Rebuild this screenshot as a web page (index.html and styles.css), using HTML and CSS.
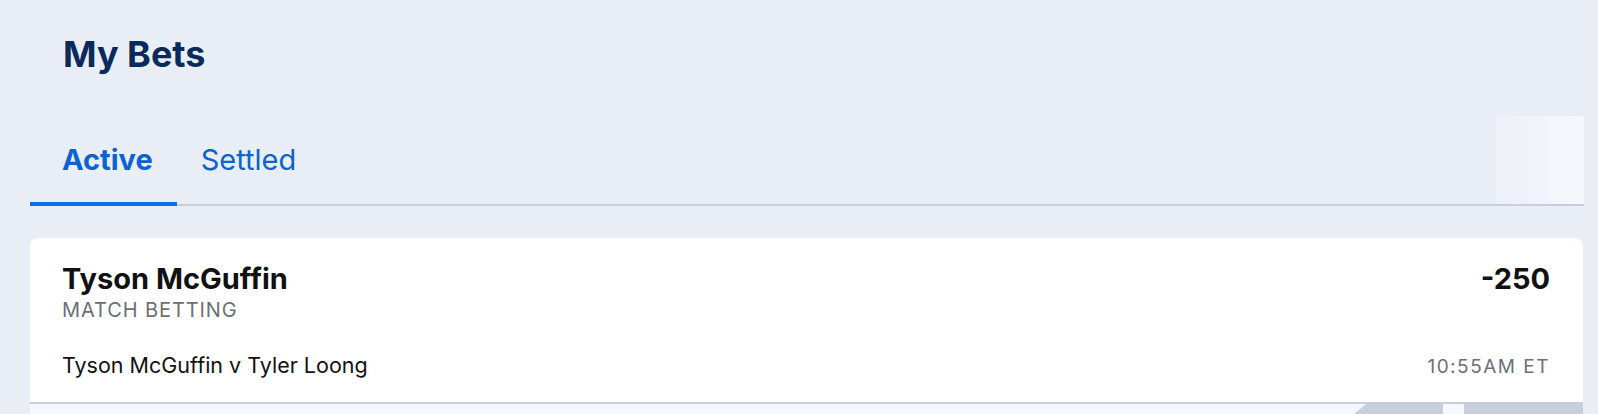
FILE: index.html
```html
<!DOCTYPE html>
<html lang="en">
<head>
    <meta charset="UTF-8">
    <meta name="viewport" content="width=device-width, initial-scale=1.0">
    <title>My Bets</title>
    <link rel="stylesheet" href="styles.css">
</head>
<body>

<!-- Page header -->
<div class="page-header">
    <h1 class="page-title">My Bets</h1>
</div>

<!-- Tabs -->
<div class="tabs-wrap">
    <div class="tabs">
        <a href="#" class="tab tab-active">Active</a>
        <a href="#" class="tab">Settled</a>
    </div>
    <div class="tabs-fade"></div>
</div>

<!-- Bet list -->
<div class="bet-list">
    <div class="bet-card">
        <div class="bet-row">
            <div class="bet-selection">Tyson McGuffin</div>
            <div class="bet-odds">-250</div>
        </div>
        <div class="bet-market">MATCH BETTING</div>
        <div class="bet-row bet-event-row">
            <div class="bet-event">Tyson McGuffin v Tyler Loong</div>
            <div class="bet-time">10:55AM ET</div>
        </div>
    </div>
    <div class="bet-footer">
        <div class="bet-footer-art"></div>
    </div>
</div>

</body>
</html>
```

FILE: styles.css
```css
body {
    font-family: Inter, "Noto Sans", sans-serif;
    background-color: #e9eef6;
    margin: 0;
    padding: 0;
    height: 414px;
    overflow: hidden;
}

/* Header */
.page-header {
    padding: 32px 0 0 63px;
    height: 116px;
    box-sizing: border-box;
}
.page-title {
    margin: 0;
    font-size: 36px;
    font-weight: 700;
    color: #0b2a5c;
    line-height: 44px;
}

/* Tabs */
.tabs-wrap {
    display: flex;
    margin: 0 14px 0 30px;
    height: 88px;
    border-bottom: 2px solid #c6cfdb;
}
.tabs {
    display: flex;
    flex: 1;
}
.tab {
    display: flex;
    align-items: center;
    padding: 0 24px;
    font-size: 29px;
    color: #0b63d1;
    text-decoration: none;
    border-bottom: 4px solid transparent;
    margin-bottom: -2px;
}
.tab:first-child {
    padding-left: 32px;
}
.tab-active {
    font-weight: 700;
    border-bottom-color: #0d6fe6;
}
.tabs-fade {
    width: 88px;
    background: linear-gradient(to right, #edf1f7, #f5f8fd);
}

/* Bet card */
.bet-list {
    margin: 32px 15px 0 30px;
}
.bet-card {
    background-color: #fff;
    border-radius: 8px 8px 0 0;
    padding: 24px 33px 0 32px;
    height: 166px;
    box-sizing: border-box;
    border-bottom: 2px solid #c6d0dc;
}
.bet-row {
    display: flex;
    justify-content: space-between;
    align-items: baseline;
}
.bet-selection, .bet-odds {
    font-size: 29px;
    font-weight: 700;
    color: #111;
    line-height: 34px;
}
.bet-market {
    font-size: 20px;
    letter-spacing: 0.9px;
    color: #6c7076;
    line-height: 29px;
}
.bet-event-row {
    margin-top: 27px;
}
.bet-event {
    font-size: 21.5px;
    color: #111;
    line-height: 26px;
}
.bet-time {
    font-size: 19px;
    letter-spacing: 1.5px;
    color: #6c7076;
    line-height: 26px;
}

/* Next item peeking below */
.bet-footer {
    display: flex;
    justify-content: flex-end;
    height: 10px;
    background-color: #f5f9ff;
}
.bet-footer-art {
    width: 229px;
    background: linear-gradient(to right, #c6d0dc 89px, #f5f9ff 89px, #f5f9ff 110px, #c6d0dc 110px);
    clip-path: polygon(12px 0, 100% 0, 100% 100%, 0 100%);
}
```
